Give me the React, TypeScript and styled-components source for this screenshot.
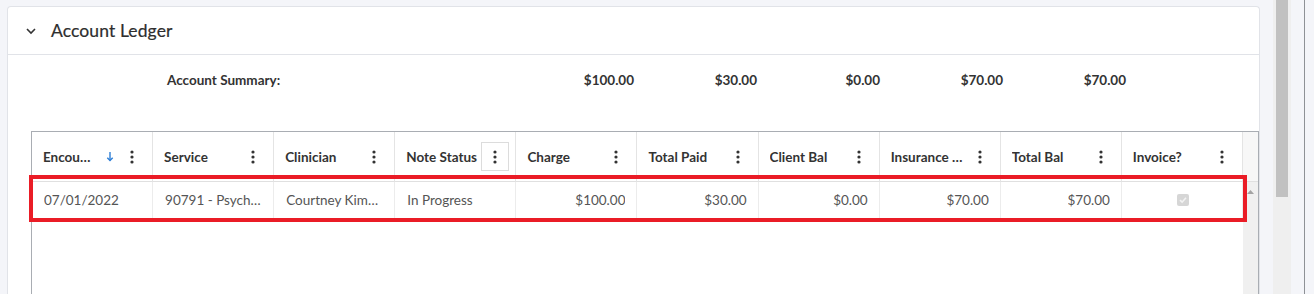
import React from "react";
import styled, { createGlobalStyle } from "styled-components";

const Global = createGlobalStyle`
  html, body { margin: 0; padding: 0; }
  body {
    background: #f4f5f9;
    font-family: Lato, "Open Sans", "Liberation Sans", sans-serif;
    color: #333;
    overflow: hidden;
  }
`;

const Page = styled.div`
  display: flex;
  height: 294px;
  overflow: hidden;
  background: #f4f5f9;
`;

const Main = styled.div`
  width: 1253px;
  padding: 6px 0 0 7px;
  flex-shrink: 0;
`;

const Gutter = styled.div<{ $w: number }>`
  width: ${(p) => p.$w}px;
  flex-shrink: 0;
  background: #f4f5f9;
`;

const Track = styled.div`
  width: 18px;
  flex-shrink: 0;
  background: #efefef;
  display: flex;
  justify-content: center;
`;

const Thumb = styled.div`
  width: 12px;
  height: 197px;
  background: #c1c1c1;
`;

const EdgeLine = styled.div`
  width: 1px;
  flex-shrink: 0;
  background: #8e9196;
`;

const Card = styled.div`
  background: #fff;
  border: 1px solid #e1e3e8;
  border-bottom: none;
  border-radius: 4px 4px 0 0;
  height: 320px;
  box-sizing: border-box;
`;

const CardHeader = styled.div`
  height: 47px;
  display: flex;
  align-items: center;
  padding-left: 17px;
  gap: 14px;
  border-bottom: 1px solid #e1e3e8;
`;

const Title = styled.h2`
  margin: 0;
  font-size: 17.5px;
  font-weight: 400;
  color: #2e2e2e;
  letter-spacing: 0.1px;
  -webkit-text-stroke: 0.2px #2e2e2e;
`;

const CardBody = styled.div`
  padding: 16px 0 0 23px;
`;

const Summary = styled.div`
  display: grid;
  grid-template-columns: 344px repeat(5, 123px);
  padding-left: 136px;
  height: 18px;
  align-items: center;
  font-size: 13.5px;
  font-weight: 700;
  color: #333;
`;

const SummaryValue = styled.span`
  text-align: right;
`;

const Grid = styled.div`
  position: relative;
  margin-top: 42px;
  border: 1px solid #a9adb3;
  height: 200px;
  box-sizing: border-box;
  display: grid;
  grid-template-columns: repeat(10, 121.1px) 15px;
  grid-template-rows: 50px 37px 1fr;
`;

const HeadCell = styled.div`
  display: flex;
  align-items: center;
  padding: 0 6px 0 11px;
  border-right: 1px solid #e4e4e4;
  border-bottom: 1px solid #e0e0e0;
  font-size: 13.5px;
  font-weight: 700;
  color: #333;
  min-width: 0;
`;

const HeadLabel = styled.span<{ $max?: number }>`
  flex: ${(p) => (p.$max ? "0 1 auto" : "1")};
  max-width: ${(p) => (p.$max ? `${p.$max}px` : "none")};
  white-space: nowrap;
  overflow: hidden;
  text-overflow: ellipsis;
`;

const Spacer = styled.span`
  flex: 1;
`;

const MenuButton = styled.span<{ $focused?: boolean }>`
  width: 28px;
  height: 29px;
  box-sizing: border-box;
  display: flex;
  align-items: center;
  justify-content: center;
  flex-shrink: 0;
  border: 1px solid ${(p) => (p.$focused ? "#dcdcdc" : "transparent")};
`;

const SortIcon = styled.span`
  display: flex;
  margin-right: 4px;
`;

const HeadScroll = styled.div`
  background: #f7f7f7;
  border-bottom: 1px solid #e0e0e0;
`;

const BodyScroll = styled.div`
  grid-row: 2 / span 2;
  grid-column: 11;
  background: #f0f0f0;
  display: flex;
  justify-content: center;
  padding-top: 8px;
`;

const Cell = styled.div<{ $numeric?: boolean; $center?: boolean }>`
  display: flex;
  align-items: center;
  justify-content: ${(p) => (p.$center ? "center" : p.$numeric ? "flex-end" : "flex-start")};
  padding: ${(p) => (p.$numeric ? "0 11px 0 12px" : "0 9.5px 0 12px")};
  border-right: 1px solid #ececec;
  border-bottom: 1px solid #e4e4e4;
  font-size: 13.5px;
  color: #555;
  white-space: nowrap;
  overflow: hidden;
  min-width: 0;
`;

const CellText = styled.span`
  overflow: hidden;
  text-overflow: ellipsis;
`;

const Filler = styled.div`
  grid-column: 1 / span 10;
`;

const Checkbox = styled.span`
  width: 12px;
  height: 12px;
  border-radius: 2px;
  background: #d6d6d6;
  display: flex;
  align-items: center;
  justify-content: center;
`;

const Highlight = styled.div`
  position: absolute;
  left: -3px;
  top: 43px;
  width: 1218px;
  height: 47px;
  border: 4px solid #ea1c26;
  box-sizing: border-box;
  pointer-events: none;
`;

const Chevron = () => (
  <svg width="12" height="8" viewBox="0 0 12 8">
    <path d="M2 2 L6 6 L10 2" fill="none" stroke="#333" strokeWidth="1.6" />
  </svg>
);

const Kebab = () => (
  <svg width="4" height="14" viewBox="0 0 4 14">
    <circle cx="2" cy="2" r="1.6" fill="#333" />
    <circle cx="2" cy="7" r="1.6" fill="#333" />
    <circle cx="2" cy="12" r="1.6" fill="#333" />
  </svg>
);

const SortDown = () => (
  <svg width="8" height="11" viewBox="0 0 8 11">
    <path d="M4 1 V9.5" stroke="#2f7fd6" strokeWidth="1.4" fill="none" />
    <path d="M1.3 6.8 L4 9.6 L6.7 6.8" stroke="#2f7fd6" strokeWidth="1.4" fill="none" />
  </svg>
);

const Check = () => (
  <svg width="10" height="10" viewBox="0 0 10 10">
    <path d="M2 5.2 L4.1 7.2 L8 2.8" stroke="#f3f3f3" strokeWidth="1.6" fill="none" />
  </svg>
);

const UpArrow = () => (
  <svg width="7" height="4" viewBox="0 0 7 4">
    <path d="M0 4 L3.5 0 L7 4 Z" fill="#a3a3a3" />
  </svg>
);

type Col = { label: string; sort?: boolean; focused?: boolean };

const columns: Col[] = [
  { label: "Encounter Date", sort: true },
  { label: "Service" },
  { label: "Clinician" },
  { label: "Note Status", focused: true },
  { label: "Charge" },
  { label: "Total Paid" },
  { label: "Client Bal" },
  { label: "Insurance Bal" },
  { label: "Total Bal" },
  { label: "Invoice?" },
];

const row: { v: string; numeric?: boolean }[] = [
  { v: "07/01/2022" },
  { v: "90791 - Psychiatric Diagnostic Evaluation" },
  { v: "Courtney Kimberly" },
  { v: "In Progress" },
  { v: "$100.00", numeric: true },
  { v: "$30.00", numeric: true },
  { v: "$0.00", numeric: true },
  { v: "$70.00", numeric: true },
  { v: "$70.00", numeric: true },
];

const summary = ["$100.00", "$30.00", "$0.00", "$70.00", "$70.00"];

export default function App() {
  return (
    <>
      <Global />
      <Page>
        <Main>
          <Card>
            <CardHeader>
              <Chevron />
              <Title>Account Ledger</Title>
            </CardHeader>
            <CardBody>
              <Summary>
                <span>Account Summary:</span>
                {summary.map((s, i) => (
                  <SummaryValue key={i}>{s}</SummaryValue>
                ))}
              </Summary>
              <Grid>
                {columns.map((c) => (
                  <HeadCell key={c.label}>
                    <HeadLabel $max={c.sort ? 50 : undefined}>{c.label}</HeadLabel>
                    {c.sort && (
                      <>
                        <Spacer />
                        <SortIcon>
                          <SortDown />
                        </SortIcon>
                      </>
                    )}
                    <MenuButton $focused={c.focused}>
                      <Kebab />
                    </MenuButton>
                  </HeadCell>
                ))}
                <HeadScroll />
                {row.map((r, i) => (
                  <Cell key={i} $numeric={r.numeric}>
                    <CellText>{r.v}</CellText>
                  </Cell>
                ))}
                <Cell $center>
                  <Checkbox>
                    <Check />
                  </Checkbox>
                </Cell>
                <BodyScroll>
                  <UpArrow />
                </BodyScroll>
                <Filler />
                <Highlight />
              </Grid>
            </CardBody>
          </Card>
        </Main>
        <Gutter $w={13} />
        <Track>
          <Thumb />
        </Track>
        <Gutter $w={13} />
        <EdgeLine />
        <Gutter $w={9} />
      </Page>
    </>
  );
}
